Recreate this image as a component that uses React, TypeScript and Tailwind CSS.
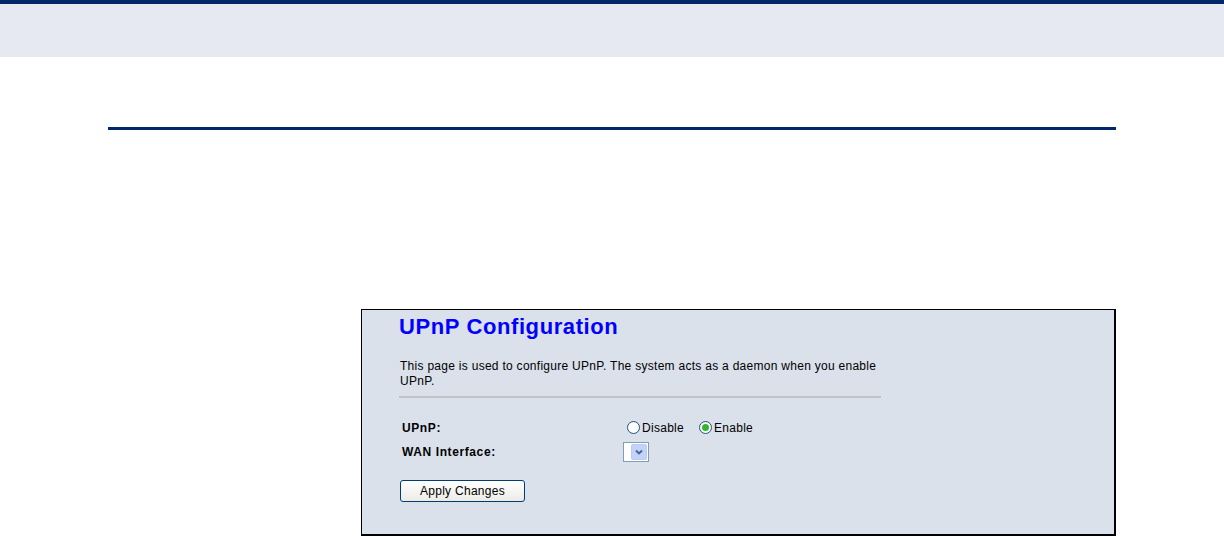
import React from 'react';

const Radio: React.FC<{ checked?: boolean; label: string }> = ({ checked, label }) => (
  <label className="flex items-center gap-[2px]">
    <span className="w-[13px] h-[13px] rounded-full border border-[#1c5180] bg-white flex items-center justify-center">
      {checked && <span className="w-[7px] h-[7px] rounded-full bg-[#2eb82e]"></span>}
    </span>
    <span className="tracking-[0.28px]">{label}</span>
  </label>
);

const App: React.FC = () => {
  return (
    <div className="w-[1224px] h-[537px] bg-white overflow-hidden flex flex-col" style={{ fontFamily: '"Liberation Sans", Arial, sans-serif' }}>
      {/* Top band */}
      <div className="h-[4px] bg-[#002868]"></div>
      <div className="h-[53px] bg-[#e6e9f2]"></div>

      {/* Rule */}
      <div className="mt-[70px] ml-[108px] w-[1008px] h-[3px] bg-[#002868]"></div>

      {/* Panel */}
      <div className="mt-[179px] ml-[361px] w-[755px] h-[227px] border border-black border-r-2 border-b-2 bg-[#dae1eb] pl-[37px] pt-[3px]">
        <h1 className="text-[22px] leading-[28px] text-[#0000ff] font-bold tracking-[0.6px]">UPnP Configuration</h1>
        <p className="mt-[18px] pl-[1px] text-[12px] leading-[15px] text-black w-[484px] tracking-[0.28px]">
          This page is used to configure UPnP. The system acts as a daemon when you enable UPnP.
        </p>
        <div className="mt-[7px] w-[482px] h-[2px] bg-[#c0c4c8]"></div>

        <div className="mt-[22px] flex items-center text-[12px] h-[15px]">
          <span className="w-[228px] pl-[3px] font-bold tracking-[0.6px]">UPnP:</span>
          <div className="flex items-center gap-[15px]">
            <Radio label="Disable" />
            <Radio checked label="Enable" />
          </div>
        </div>

        <div className="mt-[7px] flex items-center text-[12px]">
          <span className="w-[224px] pl-[3px] font-bold tracking-[0.6px]">WAN Interface:</span>
          <div className="w-[26px] h-[20px] border border-[#7f9db9] bg-white flex items-center justify-end pr-[1px]">
            <span className="w-[16px] h-[16px] bg-[#c1d3fb] border border-[#b9c9ef] rounded-[2px] flex items-center justify-center">
              <svg width="8" height="6" viewBox="0 0 8 6">
                <path d="M1 1.5 L4 4.5 L7 1.5" stroke="#4d6185" strokeWidth="1.8" fill="none" />
              </svg>
            </span>
          </div>
        </div>

        <button className="mt-[18px] ml-[1px] w-[125px] h-[22px] border border-[#003c74] rounded-[3px] bg-gradient-to-b from-white to-[#ecebe6] text-[12px] text-black tracking-[0.28px] flex items-center justify-center">
          Apply Changes
        </button>
      </div>
    </div>
  );
};

export default App;
